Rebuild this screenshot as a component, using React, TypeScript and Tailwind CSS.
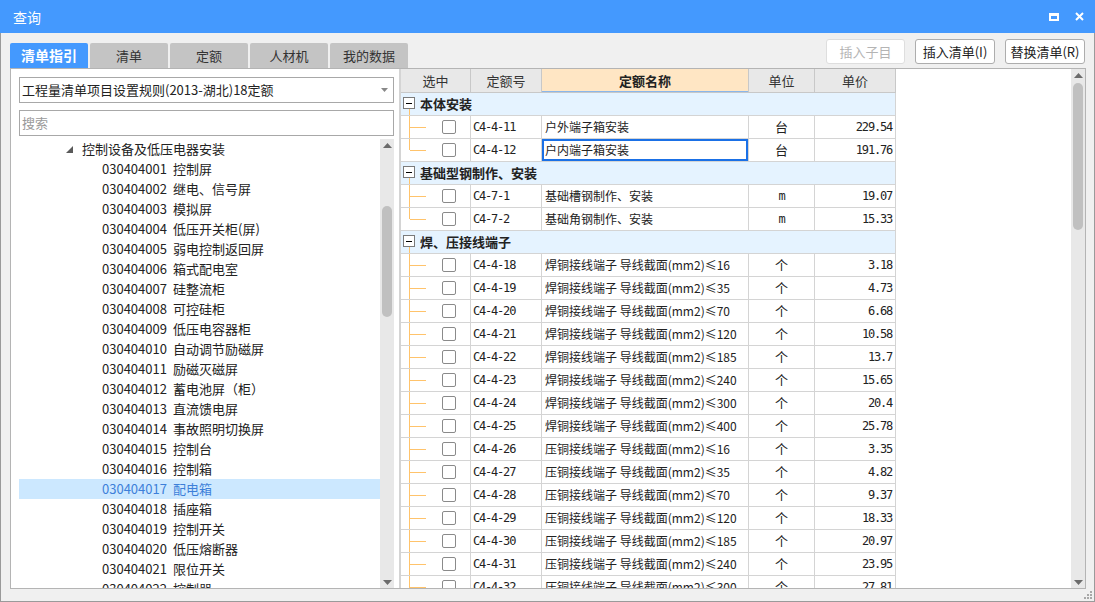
const tree: [string, string][] = [
  ["030404001", "控制屏"],
  ["030404002", "继电、信号屏"],
  ["030404003", "模拟屏"],
  ["030404004", "低压开关柜(屏)"],
  ["030404005", "弱电控制返回屏"],
  ["030404006", "箱式配电室"],
  ["030404007", "硅整流柜"],
  ["030404008", "可控硅柜"],
  ["030404009", "低压电容器柜"],
  ["030404010", "自动调节励磁屏"],
  ["030404011", "励磁灭磁屏"],
  ["030404012", "蓄电池屏（柜）"],
  ["030404013", "直流馈电屏"],
  ["030404014", "事故照明切换屏"],
  ["030404015", "控制台"],
  ["030404016", "控制箱"],
  ["030404017", "配电箱"],
  ["030404018", "插座箱"],
  ["030404019", "控制开关"],
  ["030404020", "低压熔断器"],
  ["030404021", "限位开关"],
  ["030404022", "控制器"],
]

type Row =
  | { g: string }
  | { c: string; n: string; u: string; p: string; last?: boolean; sel?: boolean }

const wire = (kind: string, max: string, code: string, price: string, last = false): Row => ({
  c: code,
  n: `${kind}接线端子 导线截面(mm2)≤${max}`,
  u: "个",
  p: price,
  last,
})

const rows: Row[] = [
  { g: "本体安装" },
  { c: "C4-4-11", n: "户外端子箱安装", u: "台", p: "229.54" },
  { c: "C4-4-12", n: "户内端子箱安装", u: "台", p: "191.76", last: true, sel: true },
  { g: "基础型钢制作、安装" },
  { c: "C4-7-1", n: "基础槽钢制作、安装", u: "m", p: "19.07" },
  { c: "C4-7-2", n: "基础角钢制作、安装", u: "m", p: "15.33", last: true },
  { g: "焊、压接线端子" },
  wire("焊铜", "16", "C4-4-18", "3.18"),
  wire("焊铜", "35", "C4-4-19", "4.73"),
  wire("焊铜", "70", "C4-4-20", "6.68"),
  wire("焊铜", "120", "C4-4-21", "10.58"),
  wire("焊铜", "185", "C4-4-22", "13.7"),
  wire("焊铜", "240", "C4-4-23", "15.65"),
  wire("焊铜", "300", "C4-4-24", "20.4"),
  wire("焊铜", "400", "C4-4-25", "25.78"),
  wire("压铜", "16", "C4-4-26", "3.35"),
  wire("压铜", "35", "C4-4-27", "4.82"),
  wire("压铜", "70", "C4-4-28", "9.37"),
  wire("压铜", "120", "C4-4-29", "18.33"),
  wire("压铜", "185", "C4-4-30", "20.97"),
  wire("压铜", "240", "C4-4-31", "23.95"),
  wire("压铜", "300", "C4-4-32", "27.81"),
]

const tabs = ["清单指引", "清单", "定额", "人材机", "我的数据"]

function Arrow({ down }: { down?: boolean }) {
  return (
    <svg width="9" height="5" viewBox="0 0 9 5">
      <polygon points={down ? "0,0 9,0 4.5,5" : "0,5 9,5 4.5,0"} fill="#6b6b6b" />
    </svg>
  )
}

function ScrollBar({ top, height }: { top: number; height: number }) {
  return (
    <div className="w-[14px] shrink-0 bg-[#e8e8e8] flex flex-col items-center">
      <div className="h-[12px] flex items-center justify-center">
        <Arrow />
      </div>
      <div className="w-[10px] rounded-full bg-[#c0c0c0]" style={{ marginTop: top, height }} />
      <div className="flex-1" />
      <div className="h-[12px] flex items-center justify-center">
        <Arrow down />
      </div>
    </div>
  )
}

// 子项前的树形连线
function TreeLine({ last }: { last?: boolean }) {
  return (
    <div className="w-[30px] h-full shrink-0 flex">
      <div className="ml-[8px] w-px flex flex-col">
        <div className="h-[11px] bg-[#ffc36b]" />
        <div className={last ? "flex-1" : "flex-1 bg-[#ffc36b]"} />
      </div>
      <div className="w-[16px] h-px mt-[11px] bg-[#ffc36b]" />
    </div>
  )
}

export default function App() {
  const cjk = "font-['Noto_Sans_CJK_SC',sans-serif]"
  const mono = "font-['DejaVu_Sans_Mono','Noto_Sans_CJK_SC',monospace] text-[12px] tracking-[-1.2px]"
  return (
    <div className={`w-[1095px] h-[602px] flex flex-col bg-[#f0f0f0] text-[#222] ${cjk}`}>
      <div className="h-[33px] shrink-0 bg-[#4499fe] flex items-center pl-[13px] pr-[11px]">
        <span className="text-white text-[14px] leading-none">查询</span>
        <div className="ml-auto flex items-center gap-[16px]">
          <div className="w-[10px] h-[8px] border-2 border-t-[3px] border-white" />
          <svg width="9" height="9" viewBox="0 0 9 9">
            <path d="M1 1L8 8M8 1L1 8" stroke="#fff" strokeWidth="2" />
          </svg>
        </div>
      </div>

      <div className="flex-1 flex flex-col border-x border-b border-[#9a9a9a] pl-[9px] pr-[8px]">
        <div className="h-[35px] flex shrink-0">
          <div className="flex items-end gap-[2px]">
            {tabs.map((t, i) => (
              <div
                key={t}
                className={
                  i === 0
                    ? "w-[78px] h-[25px] rounded-t-[2px] bg-[#4499fe] text-white font-bold text-[14px] flex items-center justify-center"
                    : "w-[78px] h-[25px] rounded-t-[2px] bg-[#c4c4c4] text-[#333] text-[13px] flex items-center justify-center"
                }
              >
                {t}
              </div>
            ))}
          </div>
          <div className="ml-auto mr-[1px] mt-[6px] flex gap-[10px] text-[13px]">
            <div className="w-[79px] h-[25px] border border-[#dedede] rounded-[3px] bg-white text-[#b4b4b4] flex items-center justify-center">
              插入子目
            </div>
            <div className="w-[80px] h-[25px] border border-[#adadad] rounded-[3px] bg-white flex items-center justify-center">
              插入清单(I)
            </div>
            <div className="w-[80px] h-[25px] border border-[#adadad] rounded-[3px] bg-white flex items-center justify-center">
              替换清单(R)
            </div>
          </div>
        </div>

        <div className="h-[521px] shrink-0 flex border border-[#b4b4b4] bg-white">
          <div className="w-[388px] shrink-0 flex flex-col pl-[8px] pr-[5px] pt-[8px]">
            <div className="h-[26px] shrink-0 border border-[#a8a8a8] flex items-center pl-[2px] pr-[5px] text-[13px]">
              <span>工程量清单项目设置规则(2013-湖北)18定额</span>
              <svg width="7" height="4" className="ml-auto">
                <polygon points="0,0 7,0 3.5,4" fill="#888" />
              </svg>
            </div>
            <div className="h-[26px] shrink-0 mt-[7px] border border-[#a8a8a8] flex items-center pl-[2px] text-[13px] text-[#9a9a9a]">
              搜索
            </div>
            <div className="flex-1 min-h-0 mt-[3px] flex overflow-hidden">
              <div className="flex-1 overflow-hidden text-[13px]">
                <div className="h-[20px] flex items-center pl-[47px]">
                  <svg width="7" height="7">
                    <polygon points="7,0 7,7 0,7" fill="#5a5a5a" />
                  </svg>
                  <span className="ml-[9px] leading-[20px]">控制设备及低压电器安装</span>
                </div>
                {tree.map(([code, name]) => (
                  <div
                    key={code}
                    className={
                      code === "030404017"
                        ? "h-[20px] flex items-center pl-[83px] bg-[#cce8ff] text-[#3d7fd9]"
                        : "h-[20px] flex items-center pl-[83px]"
                    }
                  >
                    <span className="w-[71px] leading-[20px]">{code}</span>
                    <span className="leading-[20px]">{name}</span>
                  </div>
                ))}
              </div>
              <ScrollBar top={55} height={111} />
            </div>
          </div>

          <div className="w-[2px] shrink-0 bg-[#d4d4d4]" />

          <div className="flex-1 flex min-w-0">
            <div className="flex-1 overflow-hidden">
              <div className="w-[495px] h-[24px] flex bg-[#e8e8e8] border-b border-[#c8c8c8] text-[13px] text-[#333]">
                <div className="w-[70px] border-r border-[#c8c8c8] flex items-center justify-center">选中</div>
                <div className="w-[71px] border-r border-[#c8c8c8] flex items-center justify-center">定额号</div>
                <div className="w-[207px] border-r border-[#c8c8c8] bg-[#ffe6c4] shadow-[inset_0_-1px_0_#8ab6ea] flex items-center justify-center font-bold text-[#222]">
                  定额名称
                </div>
                <div className="w-[66px] border-r border-[#c8c8c8] flex items-center justify-center">单位</div>
                <div className="w-[81px] border-r border-[#c8c8c8] flex items-center justify-center">单价</div>
              </div>
              {rows.map((r, i) =>
                "g" in r ? (
                  <div key={i} className="w-[495px] h-[23px] flex border-b border-r border-[#d4d4d4] bg-[#e5f3ff]">
                    <div className="w-[12px] ml-[2px] flex flex-col items-center pt-[4px]">
                      <div className="w-[12px] h-[12px] shrink-0 border border-[#7a7a7a] bg-white flex items-center justify-center">
                        <div className="w-[6px] h-px bg-black" />
                      </div>
                      <div className="w-px flex-1 bg-[#ffc36b]" />
                    </div>
                    <span className="ml-[5px] text-[13px] font-bold leading-[22px]">{r.g}</span>
                  </div>
                ) : (
                  <div key={i} className="w-[495px] h-[23px] flex border-b border-[#d4d4d4] text-[12px]">
                    <div className="w-[70px] border-r border-[#d4d4d4] flex items-center">
                      <TreeLine last={r.last} />
                      <div className="ml-[11px] w-[14px] h-[14px] border border-[#8a8a8a] rounded-[2px] bg-white" />
                    </div>
                    <div className={`w-[71px] border-r border-[#d4d4d4] flex items-center pl-[2px] ${mono}`}>{r.c}</div>
                    <div
                      className={
                        r.sel
                          ? "w-[207px] border-r border-[#d4d4d4] flex items-center pl-[3px] shadow-[inset_0_0_0_2px_#1a70e6]"
                          : "w-[207px] border-r border-[#d4d4d4] flex items-center pl-[3px]"
                      }
                    >
                      {r.n}
                    </div>
                    <div
                      className={
                        r.u === "m"
                          ? `w-[66px] border-r border-[#d4d4d4] flex items-center justify-center ${mono}`
                          : "w-[66px] border-r border-[#d4d4d4] flex items-center justify-center text-[13px]"
                      }
                    >
                      {r.u}
                    </div>
                    <div className={`w-[81px] border-r border-[#d4d4d4] flex items-center justify-end pr-[3px] ${mono}`}>{r.p}</div>
                  </div>
                )
              )}
            </div>
            <ScrollBar top={2} height={147} />
          </div>
        </div>

        <div className="flex-1 flex justify-end items-end pb-[2px] mr-[-6px]">
          <svg width="8" height="8" viewBox="0 0 8 8">
            {[
              [6, 0],
              [3, 3],
              [6, 3],
              [0, 6],
              [3, 6],
              [6, 6],
            ].map(([x, y]) => (
              <rect key={`${x}-${y}`} x={x} y={y} width="2" height="2" fill="#a8a8a8" />
            ))}
          </svg>
        </div>
      </div>
    </div>
  )
}
